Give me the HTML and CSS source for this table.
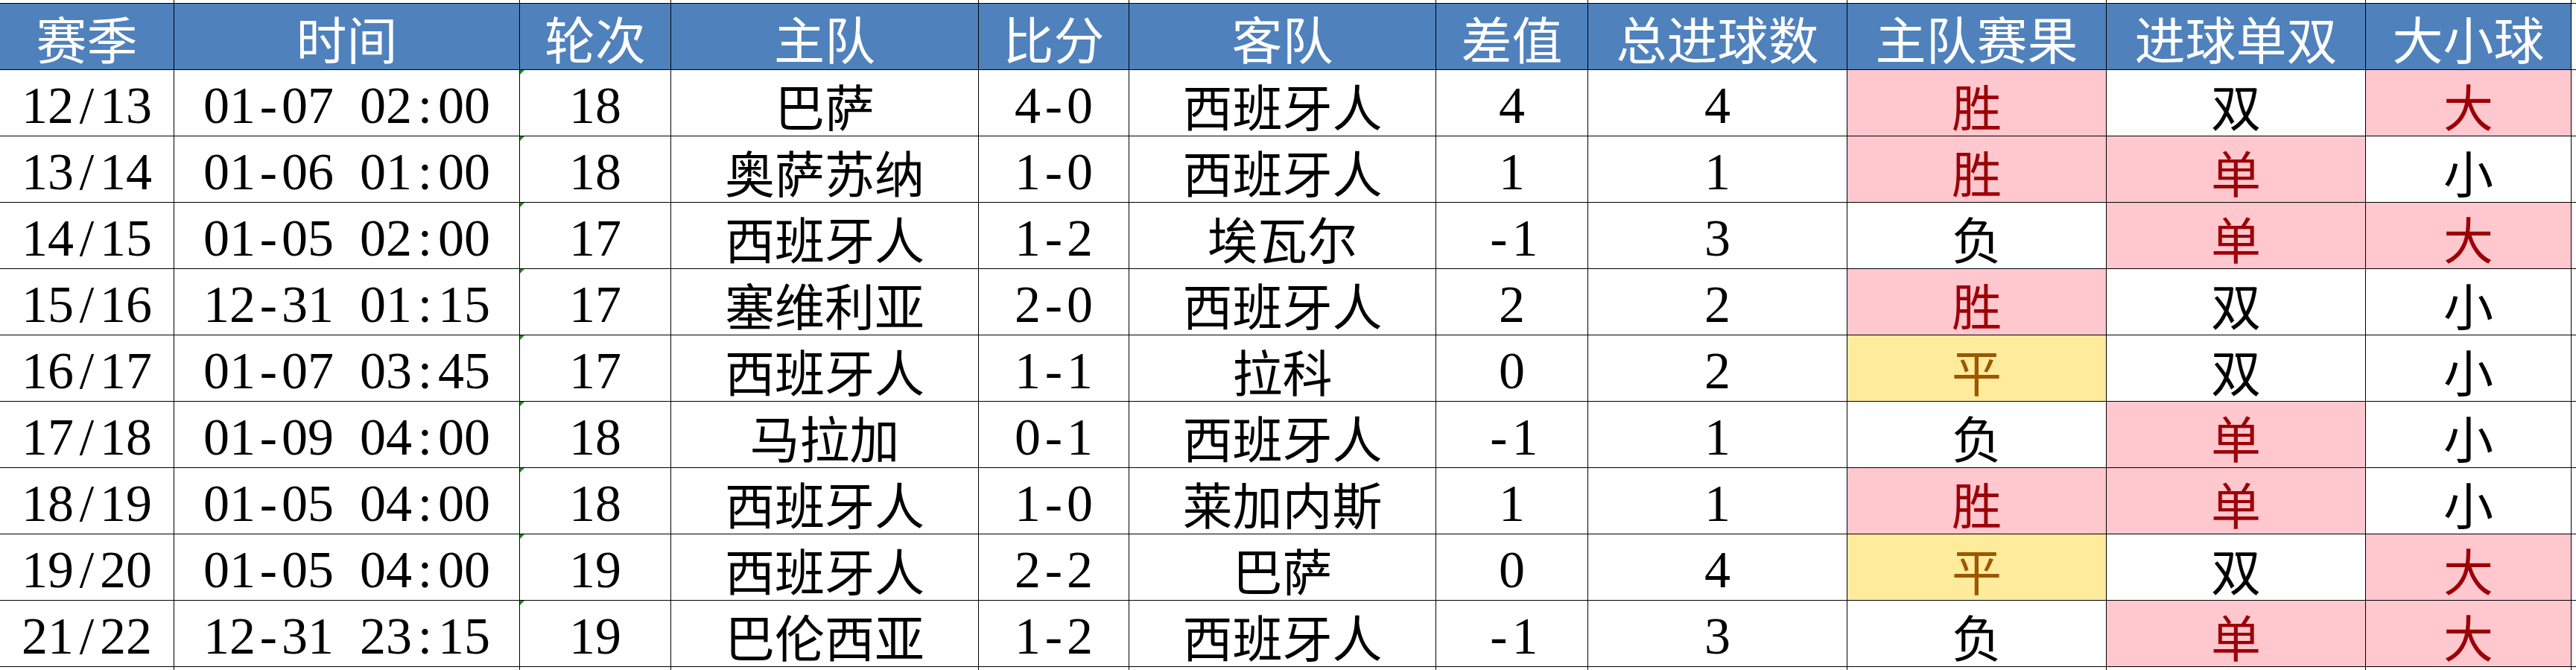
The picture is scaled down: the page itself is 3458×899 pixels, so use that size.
FILE: index.html
```html
<!DOCTYPE html>
<html lang="zh-CN">
<head>
<meta charset="utf-8">
<title>西班牙人 历史战绩</title>
<link rel="stylesheet" href="styles.css">
</head>
<body>
<div class="sheet">
  <div class="row edge">
    <div class="c"></div><div class="c"></div><div class="c"></div><div class="c"></div><div class="c"></div><div class="c"></div><div class="c"></div><div class="c"></div><div class="c"></div><div class="c"></div><div class="c"></div><div class="c"></div>
  </div>
  <div class="row head">
    <div class="c">赛季</div><div class="c">时间</div><div class="c">轮次</div><div class="c">主队</div><div class="c">比分</div><div class="c">客队</div><div class="c">差值</div><div class="c">总进球数</div><div class="c">主队赛果</div><div class="c">进球单双</div><div class="c">大小球</div><div class="c blank"></div>
  </div>

  <div class="row">
    <div class="c n">12<span class="h">/</span>13</div><div class="c n t">01<span class="h">-</span>07 02<span class="h">:</span>00</div><div class="c n rd">18</div><div class="c zh">巴萨</div><div class="c n">4<span class="h">-</span>0</div><div class="c zh">西班牙人</div><div class="c n">4</div><div class="c n">4</div><div class="c zh bad">胜</div><div class="c zh">双</div><div class="c zh bad">大</div><div class="c"></div>
  </div>
  <div class="row">
    <div class="c n">13<span class="h">/</span>14</div><div class="c n t">01<span class="h">-</span>06 01<span class="h">:</span>00</div><div class="c n rd">18</div><div class="c zh">奥萨苏纳</div><div class="c n">1<span class="h">-</span>0</div><div class="c zh">西班牙人</div><div class="c n">1</div><div class="c n">1</div><div class="c zh bad">胜</div><div class="c zh bad">单</div><div class="c zh">小</div><div class="c"></div>
  </div>
  <div class="row">
    <div class="c n">14<span class="h">/</span>15</div><div class="c n t">01<span class="h">-</span>05 02<span class="h">:</span>00</div><div class="c n rd">17</div><div class="c zh">西班牙人</div><div class="c n">1<span class="h">-</span>2</div><div class="c zh">埃瓦尔</div><div class="c n"><span class="h">-</span>1</div><div class="c n">3</div><div class="c zh">负</div><div class="c zh bad">单</div><div class="c zh bad">大</div><div class="c"></div>
  </div>
  <div class="row">
    <div class="c n">15<span class="h">/</span>16</div><div class="c n t">12<span class="h">-</span>31 01<span class="h">:</span>15</div><div class="c n rd">17</div><div class="c zh">塞维利亚</div><div class="c n">2<span class="h">-</span>0</div><div class="c zh">西班牙人</div><div class="c n">2</div><div class="c n">2</div><div class="c zh bad">胜</div><div class="c zh">双</div><div class="c zh">小</div><div class="c"></div>
  </div>
  <div class="row">
    <div class="c n">16<span class="h">/</span>17</div><div class="c n t">01<span class="h">-</span>07 03<span class="h">:</span>45</div><div class="c n rd">17</div><div class="c zh">西班牙人</div><div class="c n">1<span class="h">-</span>1</div><div class="c zh">拉科</div><div class="c n">0</div><div class="c n">2</div><div class="c zh neutral">平</div><div class="c zh">双</div><div class="c zh">小</div><div class="c"></div>
  </div>
  <div class="row">
    <div class="c n">17<span class="h">/</span>18</div><div class="c n t">01<span class="h">-</span>09 04<span class="h">:</span>00</div><div class="c n rd">18</div><div class="c zh">马拉加</div><div class="c n">0<span class="h">-</span>1</div><div class="c zh">西班牙人</div><div class="c n"><span class="h">-</span>1</div><div class="c n">1</div><div class="c zh">负</div><div class="c zh bad">单</div><div class="c zh">小</div><div class="c"></div>
  </div>
  <div class="row">
    <div class="c n">18<span class="h">/</span>19</div><div class="c n t">01<span class="h">-</span>05 04<span class="h">:</span>00</div><div class="c n rd">18</div><div class="c zh">西班牙人</div><div class="c n">1<span class="h">-</span>0</div><div class="c zh">莱加内斯</div><div class="c n">1</div><div class="c n">1</div><div class="c zh bad">胜</div><div class="c zh bad">单</div><div class="c zh">小</div><div class="c"></div>
  </div>
  <div class="row">
    <div class="c n">19<span class="h">/</span>20</div><div class="c n t">01<span class="h">-</span>05 04<span class="h">:</span>00</div><div class="c n rd">19</div><div class="c zh">西班牙人</div><div class="c n">2<span class="h">-</span>2</div><div class="c zh">巴萨</div><div class="c n">0</div><div class="c n">4</div><div class="c zh neutral">平</div><div class="c zh">双</div><div class="c zh bad">大</div><div class="c"></div>
  </div>
  <div class="row">
    <div class="c n">21<span class="h">/</span>22</div><div class="c n t">12<span class="h">-</span>31 23<span class="h">:</span>15</div><div class="c n rd">19</div><div class="c zh">巴伦西亚</div><div class="c n">1<span class="h">-</span>2</div><div class="c zh">西班牙人</div><div class="c n"><span class="h">-</span>1</div><div class="c n">3</div><div class="c zh">负</div><div class="c zh bad">单</div><div class="c zh bad">大</div><div class="c"></div>
  </div>

  <div class="row edge bottom">
    <div class="c"></div><div class="c"></div><div class="c"></div><div class="c"></div><div class="c"></div><div class="c"></div><div class="c"></div><div class="c"></div><div class="c"></div><div class="c"></div><div class="c"></div><div class="c"></div>
  </div>
</div>
</body>
</html>
```

FILE: styles.css
```css
html, body {
  margin: 0;
  padding: 0;
  background: #ffffff;
}

body {
  width: 3458px;
  height: 899px;
  overflow: hidden;
}

.sheet {
  width: 3458px;
  overflow: hidden;
  font-family: "Liberation Serif", "Noto Sans CJK SC", serif;
  color: #000000;
}

.row {
  display: grid;
  grid-template-columns: 234px 464px 203px 413px 202px 412px 204px 348px 348px 348px 276px 100px;
  height: 89px;
}

.row.edge {
  height: 5px;
}

.row.bottom {
  height: 10px;
}

.row.bottom .c {
  border-bottom: none;
}

.c {
  box-sizing: border-box;
  border-right: 1px solid #000000;
  border-bottom: 1px solid #000000;
  display: flex;
  align-items: center;
  justify-content: center;
  padding-top: 8px;
  line-height: 1;
  white-space: nowrap;
  position: relative;
}

.row.edge .c {
  padding: 0;
}

.head .c {
  background: #4f81bd;
  color: #ffffff;
  font-family: "Noto Sans CJK SC", sans-serif;
  font-size: 68px;
  padding-top: 4px;
}

.head .c.blank {
  background: #ffffff;
}

.n {
  font-size: 70px;
}

.t {
  word-spacing: 0.25em;
}

.h {
  display: inline-block;
  width: 0.5em;
  text-align: center;
}

.zh {
  font-family: "Noto Sans CJK SC", sans-serif;
  font-size: 67px;
  padding-top: 4px;
}

.bad {
  background: #ffc7ce;
  color: #9c0006;
}

.neutral {
  background: #ffeb9c;
  color: #9c5700;
}

.rd::before {
  content: "";
  position: absolute;
  top: 0;
  left: 0;
  border-top: 6px solid #1f8a1f;
  border-right: 6px solid transparent;
}
```
